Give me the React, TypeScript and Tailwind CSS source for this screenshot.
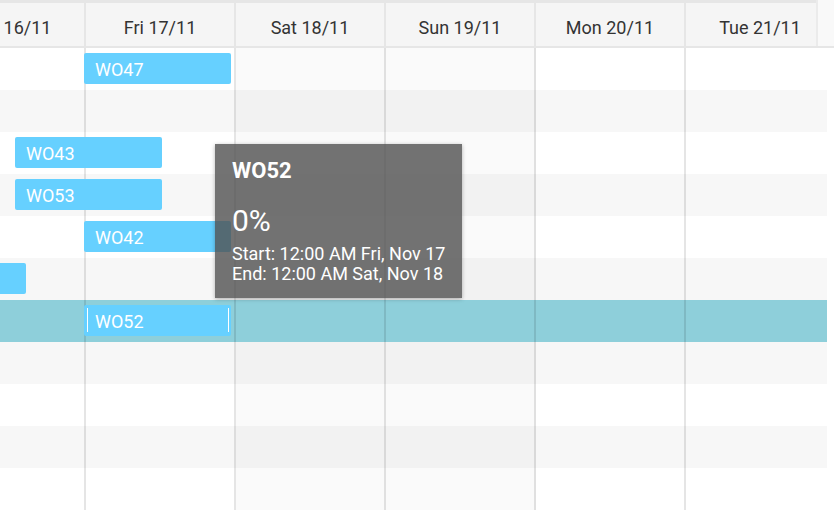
import React from 'react';

const days = [
    { label: 'Thu 16/11', weekend: false },
    { label: 'Fri 17/11', weekend: false },
    { label: 'Sat 18/11', weekend: true },
    { label: 'Sun 19/11', weekend: true },
    { label: 'Mon 20/11', weekend: false },
    { label: 'Tue 21/11', weekend: false },
];

interface Bar {
    name: string;
    left: number;
    selected?: boolean;
}

// one entry per row, null = empty row
const rows: (Bar | null)[] = [
    { name: 'WO47', left: 84 },
    null,
    { name: 'WO43', left: 15 },
    { name: 'WO53', left: 15 },
    { name: 'WO42', left: 84 },
    { name: '', left: -121 },
    { name: 'WO52', left: 84, selected: true },
    null,
    null,
    null,
    null,
];

function cellBg(rowIndex: number, weekend: boolean) {
    const odd = rowIndex % 2 === 1;
    if (weekend) return odd ? 'bg-[#f2f2f2]' : 'bg-[#fafafa]';
    return odd ? 'bg-[#f7f7f7]' : 'bg-white';
}

function TaskBar({ bar }: { bar: Bar }) {
    return (
        <div
            className="absolute top-[5px] h-[31px] w-[147px] rounded-[2px] bg-[#66d0ff] flex items-center pl-[11px] pt-px text-[18px] text-white"
            style={{ left: bar.left }}
        >
            {bar.name}
            {bar.selected && (
                <>
                    <span className="absolute left-[3px] top-[3px] bottom-[4px] w-px bg-white" />
                    <span className="absolute right-[2px] top-[3px] bottom-[4px] w-px bg-white" />
                </>
            )}
        </div>
    );
}

export default function App() {
    return (
        <div className="relative w-[834px] h-[518px] overflow-hidden bg-white font-['Roboto','Liberation_Sans',sans-serif]">
            {/* Header */}
            <div className="flex h-[48px] border-b-2 border-[#e6e6e6]">
                <div className="w-[816px] overflow-hidden border-t-[3px] border-[#e6e6e6] bg-[#f5f5f5]">
                    <div className="flex h-full -ml-[64px]">
                        {days.map((d) => (
                            <div
                                key={d.label}
                                className="w-[150px] shrink-0 border-r-2 border-[#e6e6e6] pt-[14px] text-center text-[18px] leading-[21px] text-[#333]"
                            >
                                {d.label}
                            </div>
                        ))}
                    </div>
                </div>
                <div className="flex-1 border-l-2 border-[#ebebeb] bg-[#f9f9f9]" />
            </div>

            {/* Rows */}
            <div className="w-[827px]">
                {rows.map((bar, i) => {
                    const selected = bar?.selected;
                    return (
                        <div
                            key={i}
                            className={`relative flex h-[42px] overflow-hidden ${selected ? 'bg-[#8ecfda]' : ''}`}
                        >
                            <div className="flex -ml-[64px]">
                                {days.map((d) => (
                                    <div
                                        key={d.label}
                                        className={`w-[150px] shrink-0 border-r-2 border-black/10 ${selected ? '' : cellBg(i, d.weekend)}`}
                                    />
                                ))}
                            </div>
                            {bar && <TaskBar bar={bar} />}
                        </div>
                    );
                })}
            </div>

            {/* Tooltip */}
            <div className="absolute left-[215px] top-[144px] w-[247px] h-[154px] bg-[#505050]/80 shadow-[0_1px_4px_rgba(0,0,0,0.3)] pl-[17px] pt-[14px] text-white whitespace-nowrap">
                <div className="text-[22px] leading-[26px] font-bold">WO52</div>
                <div className="mt-[19px] text-[30px] leading-[36px]">0%</div>
                <div className="mt-[5px] text-[18px] leading-[20px]">
                    <div>Start: 12:00 AM Fri, Nov 17</div>
                    <div>End: 12:00 AM Sat, Nov 18</div>
                </div>
            </div>
        </div>
    );
}
